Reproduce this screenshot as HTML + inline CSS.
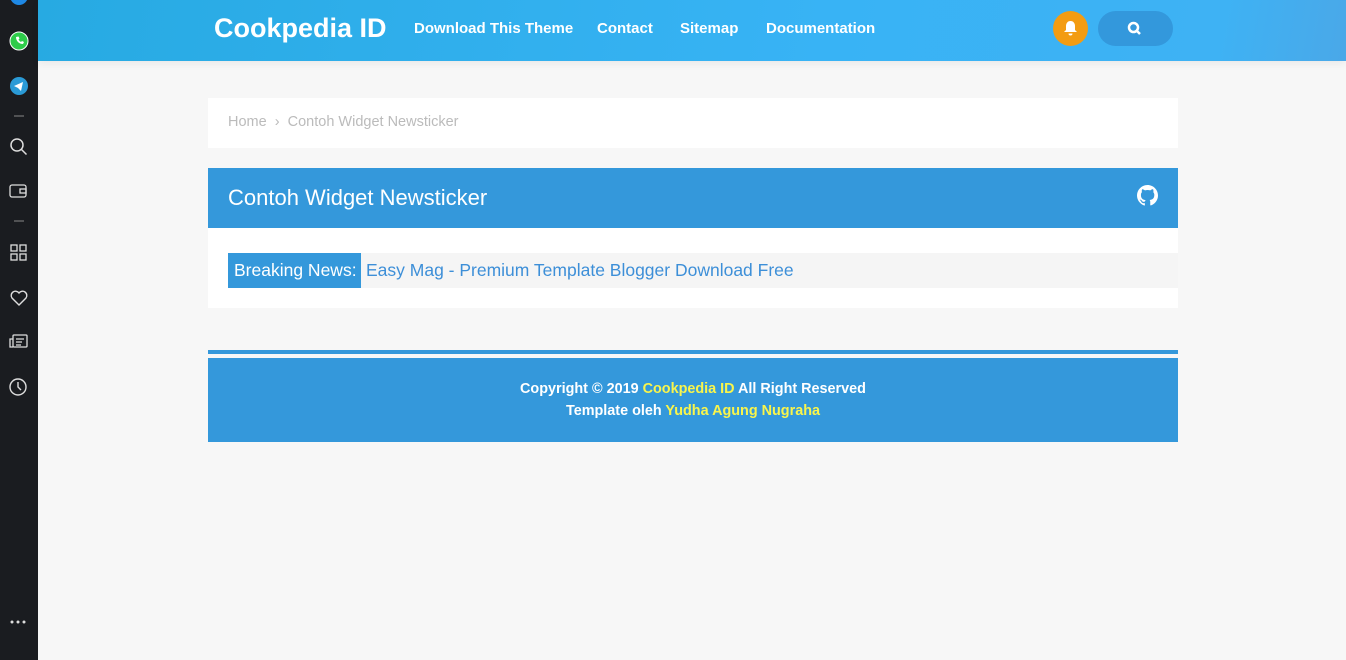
<!DOCTYPE html>
<html><head><meta charset="utf-8"><style>
*{margin:0;padding:0;box-sizing:border-box}
body{width:1346px;height:660px;background:#f7f7f7;font-family:"Liberation Sans",sans-serif;position:relative;overflow:hidden}
.side{position:absolute;left:0;top:0;width:38px;height:660px;background:#1a1c20}
.side svg{position:absolute;left:9px}
.hdr{position:absolute;left:38px;top:0;width:1308px;height:61px;background:linear-gradient(100deg,#27aae2 0%,#38b3f5 60%,#3eb2f4 90%,#4aa8e8 100%);box-shadow:0 3px 8px rgba(0,0,0,.06)}
.logo{position:absolute;left:176px;top:13px;color:#fff;font-weight:bold;font-size:27px}
.nav{position:absolute;top:20px;color:#fff;font-weight:bold;font-size:15px}
.bell{position:absolute;left:1015px;top:11px;width:35px;height:35px;border-radius:50%;background:#f39c12}
.srch{position:absolute;left:1060px;top:11px;width:75px;height:35px;border-radius:18px;background:#3398dc}
.box{position:absolute;left:208px;width:970px}
.bc{top:98px;height:50px;background:#fff;color:#bbb;font-size:14.5px;padding:16px 20px}
.ttl{top:168px;height:60px;background:#3498db;color:#fff;font-size:22px;padding:17px 20px}
.tk{top:228px;height:80px;background:#fff}
.tkin{position:absolute;left:20px;top:25px;right:0;height:35px;background:#f5f5f5;font-size:17.5px;color:#3d8fd8;white-space:nowrap}
.tkl{position:absolute;left:0;top:0;height:35px;width:133px;background:#3498db;color:#fff;padding:7px 6px;white-space:nowrap;overflow:hidden}
.ft{top:358px;height:84px;background:#3498db;color:#fff;text-align:center;font-weight:bold;font-size:14.4px;padding-top:20px;line-height:22px}
.ft span{color:#f9f54b}
</style></head><body>
<div class="side">
<svg style="top:-8px" width="20" height="16"><circle cx="10" cy="4" r="9" fill="#1e88e5"/></svg>
<svg style="top:31px" width="20" height="20"><circle cx="10" cy="10" r="9" fill="#2ecc4a" stroke="#fff" stroke-width="1"/><path d="M7 6c0 4 3 7 7 7l1-2-2-1-1 1c-1-.5-2-1.5-2.5-2.5l1-1-1-2z" fill="#fff"/></svg>
<svg style="top:76px" width="20" height="20"><circle cx="10" cy="10" r="9" fill="#2a9ad6"/><path d="M5 10l9-4-2 9-3-3z" fill="#fff"/></svg>
<svg style="top:110px" width="20" height="12"><path d="M5 6h10" stroke="#888" stroke-width="1"/></svg>
<svg style="top:137px" width="20" height="20" fill="none" stroke="#ddd" stroke-width="1.5"><circle cx="8" cy="8" r="6"/><path d="M12.5 12.5l5 5"/></svg>
<svg style="top:181px" width="20" height="20" fill="none" stroke="#ddd" stroke-width="1.3"><rect x="1" y="4" width="16" height="12" rx="2"/><rect x="11" y="8" width="6" height="4"/></svg>
<svg style="top:215px" width="20" height="12"><path d="M5 6h10" stroke="#888" stroke-width="1"/></svg>
<svg style="top:243px" width="20" height="20" fill="none" stroke="#ddd" stroke-width="1.3"><rect x="2" y="2" width="6" height="6"/><rect x="11" y="2" width="6" height="6"/><rect x="2" y="11" width="6" height="6"/><rect x="11" y="11" width="6" height="6"/></svg>
<svg style="top:288px" width="20" height="20" fill="none" stroke="#ddd" stroke-width="1.4"><path d="M10 17L3 10a4 4 0 017-5 4 4 0 017 5z"/></svg>
<svg style="top:332px" width="20" height="20" fill="none" stroke="#ddd" stroke-width="1.3"><rect x="4" y="3" width="14" height="12" rx="1"/><path d="M4 7H1v8h3M7 7h8M7 10h6M7 13h5"/></svg>
<svg style="top:377px" width="20" height="20" fill="none" stroke="#ddd" stroke-width="1.4"><circle cx="9" cy="10" r="8"/><path d="M9 5v5l3 3"/></svg>
<svg style="top:612px" width="20" height="20" fill="#ddd"><circle cx="3" cy="10" r="1.5"/><circle cx="9" cy="10" r="1.5"/><circle cx="15" cy="10" r="1.5"/></svg>
</div>
<div class="hdr">
<div class="logo">Cookpedia ID</div>
<div class="nav" style="left:376px">Download This Theme</div>
<div class="nav" style="left:559px">Contact</div>
<div class="nav" style="left:642px">Sitemap</div>
<div class="nav" style="left:728px">Documentation</div>
<div class="bell"><svg width="35" height="35"><path d="M17.5 10c-3 0-4.5 2.5-4.5 5v4l-2 2h13l-2-2v-4c0-2.5-1.5-5-4.5-5z M15.5 22.5a2 2 0 004 0z" fill="#fff"/></svg></div>
<div class="srch"><svg width="75" height="35" fill="none" stroke="#fff" stroke-width="2.5"><circle cx="35.5" cy="16.5" r="4.5"/><path d="M39 20l3 3"/></svg></div>
</div>
<div class="box bc">Home &nbsp;›&nbsp; Contoh Widget Newsticker</div>
<div class="box ttl">Contoh Widget Newsticker
<svg style="position:absolute;right:20px;top:17px" width="21" height="21" viewBox="0 0 16 16" fill="#fff"><path d="M8 0C3.6 0 0 3.6 0 8c0 3.5 2.3 6.5 5.5 7.6.4.1.5-.2.5-.4v-1.4c-2.2.5-2.7-1-2.7-1-.4-.9-.9-1.2-.9-1.2-.7-.5.1-.5.1-.5.8.1 1.2.8 1.2.8.7 1.3 1.9.9 2.4.7.1-.5.3-.9.5-1.1-1.8-.2-3.6-.9-3.6-4 0-.9.3-1.6.8-2.1-.1-.2-.4-1 .1-2.1 0 0 .7-.2 2.2.8.6-.2 1.3-.3 2-.3s1.4.1 2 .3c1.5-1 2.2-.8 2.2-.8.4 1.1.2 1.9.1 2.1.5.6.8 1.3.8 2.1 0 3.1-1.9 3.7-3.6 3.9.3.3.5.8.5 1.5v2.2c0 .2.1.5.6.4C13.7 14.5 16 11.5 16 8c0-4.4-3.6-8-8-8z"/></svg></div>
<div class="box tk"><div class="tkin"><div class="tkl">Breaking News:</div><div style="position:absolute;left:138px;top:7px">Easy Mag - Premium Template Blogger Download Free</div></div></div>
<div class="box" style="top:350px;height:4px;background:#3498db"></div>
<div class="box ft">Copyright © 2019 <span>Cookpedia ID</span> All Right Reserved<br>Template oleh <span>Yudha Agung Nugraha</span></div>
</body></html>
